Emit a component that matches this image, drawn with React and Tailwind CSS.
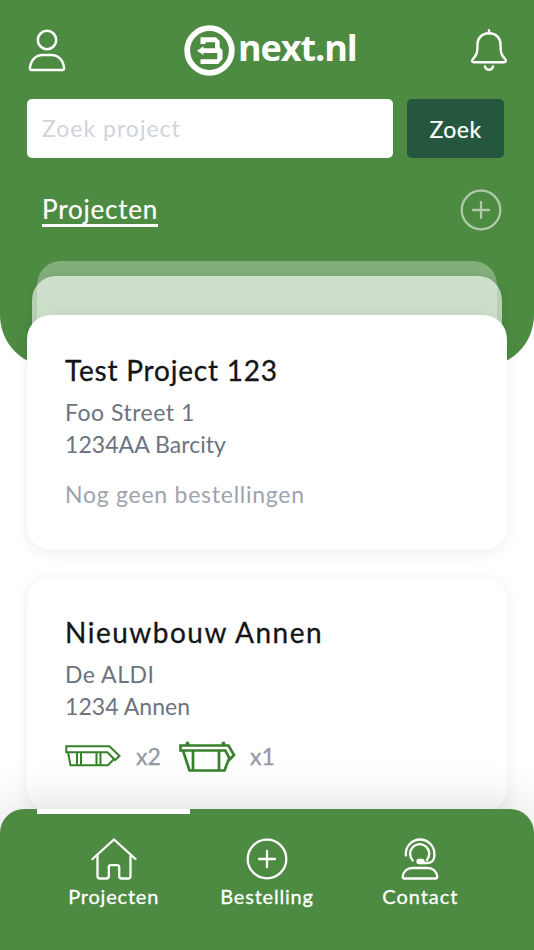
import React, { useState } from 'react';

function UserIcon() {
  return (
    <svg className="w-10 h-11" viewBox="0 0 40 44" fill="none" stroke="white" strokeWidth="2.500" strokeLinejoin="round">
      <circle cx="20" cy="11" r="9.200" />
      <path d="M4.500 41a1.600 1.600 0 0 1-1.600-1.800C3.500 31 9 26 15.500 26h9c6.500 0 12 5 12.600 13.200a1.600 1.600 0 0 1-1.600 1.800z" />
    </svg>
  );
}

function BellIcon() {
  return (
    <svg className="w-10 h-11" viewBox="0 0 40 44" fill="none" stroke="white" strokeWidth="2.400" strokeLinecap="round" strokeLinejoin="round">
      <path d="M20 1.300v3" />
      <path d="M20 4.300c-7.500 0-11.500 5-11.500 11.500 0 7.500-.7 10.300-4.200 13.700-2 2-1.300 3.800.9 3.800h29.600c2.200 0 2.900-1.800.9-3.800-3.500-3.400-4.200-6.200-4.200-13.700C31.500 9.300 27.500 4.300 20 4.300z" />
      <path d="M16 37.500c1 4.300 7 4.300 8 0" />
    </svg>
  );
}

function PlusIcon() {
  return (
    <svg className="w-[42px] h-[42px]" viewBox="0 0 42 42" fill="none" stroke="white" strokeWidth="2.300" strokeLinecap="round">
      <circle cx="21" cy="21" r="19.300" />
      <path d="M21 13v16M13 21h16" />
    </svg>
  );
}

function HomeIcon() {
  return (
    <svg className="w-[46px] h-[42px]" viewBox="0 0 46 42" fill="none" stroke="white" strokeWidth="2.300" strokeLinecap="round" strokeLinejoin="round">
      <path d="M1.500 21 23 1.500 44.500 21" />
      <path d="M6.500 18v20.200c0 1.500 1 2.300 2.300 2.300h6.700c1.500 0 2.300-.8 2.300-2.300V29.200c0-1.300.7-2 2-2h6.400c1.300 0 2 .7 2 2v9c0 1.500.8 2.300 2.300 2.300h6.700c1.300 0 2.300-.8 2.300-2.300V18" />
    </svg>
  );
}

function ContactIcon() {
  return (
    <svg className="w-[42px] h-[42px]" viewBox="0 0 42 42" fill="none" stroke="white" strokeWidth="2.300" strokeLinecap="round" strokeLinejoin="round">
      <path d="M6.800 17.500v-1.700a14.300 14.300 0 0 1 28.600 0v2c0 4.500-3 7.200-7.500 7.200H22" />
      <path d="M13.800 22.500a9.600 9.600 0 1 1 14.200-.5" />
      <rect x="18.500" y="22" width="6" height="3" rx="1.500" fill="white" />
      <path d="M5.200 40.500a1.500 1.500 0 0 1-1.500-1.700c.7-5.300 4.500-8.800 9.500-8.800h15.600c5 0 8.800 3.500 9.500 8.800a1.500 1.500 0 0 1-1.500 1.700z" />
    </svg>
  );
}

function LogoMark() {
  return (
    <svg className="w-[51px] h-[51px]" viewBox="0 0 51 51" fill="none">
      <circle cx="25.500" cy="25.500" r="22.300" stroke="white" strokeWidth="5.800" />
      <path d="M16.500 12.300H32l3.700 3.700v6.300l2.800 3V34l-4.300 4.900H16.500v-4.700h16.200l.6-.8v-5.300H19.500v1.900L13 25.700l6.500-4.500v2H31v-5.900H21.500v1.700H16.500z" fill="white" />
    </svg>
  );
}

function ClosedContainerIcon() {
  return (
    <svg className="w-[56px] h-8" viewBox="0 0 56 32" fill="none" stroke="#37812b" strokeWidth="2">
      <path d="M1.300 6.300h43.200L54.500 16l-4.500 4L42.500 12.300H1.300z" />
      <path d="M3 12.300 5.500 25.300h37.500L49 19M12 12.300v13M16 12.300v13M31.500 12.300v13M35.500 12.300v13" />
    </svg>
  );
}

function OpenContainerIcon() {
  return (
    <svg className="w-[57px] h-8" viewBox="0 0 57 32" fill="none" stroke="#37812b" strokeWidth="2.700">
      <path d="M1.500 5.500h48L55 15l-4 4.200-4.700-8.700H1.500z" />
      <path d="M4 10.500 10.500 30.500H45.500L50.500 17.500M14 10.500v20M40 10.500v20" />
      <path d="M8.500 4.500V3.300M44.500 4.500V3.300" strokeWidth="3.800" strokeLinecap="round" />
    </svg>
  );
}

const tabs = [
  { name: 'Projecten', icon: HomeIcon, tracking: 'tracking-[0.8px]' },
  { name: 'Bestelling', icon: PlusIcon, tracking: 'tracking-[0.8px]' },
  { name: 'Contact', icon: ContactIcon, tracking: 'tracking-[0.95px]' },
];

function ProjectCard({ title, titleClass, street, city, children }) {
  return (
    <div className="relative h-[235px] rounded-3xl bg-white pl-[38px] pt-[36px] shadow-[0_3px_16px_rgba(0,0,0,0.07)]">
      <h2 className={`text-[28px] leading-[38px] text-[#151515] [-webkit-text-stroke:0.3px_#151515] ${titleClass}`}>{title}</h2>
      <p className="mt-[7px] text-[23px] leading-8 tracking-[0.5px] text-[#6c7381]">{street}</p>
      <p className="text-[23px] leading-8 tracking-[0.05px] text-[#6c7381]">{city}</p>
      {children}
    </div>
  );
}

function App() {
  const [query, setQuery] = useState('');
  const [active, setActive] = useState('Projecten');

  return (
    <div className="relative flex h-[950px] w-[534px] flex-col overflow-hidden bg-white font-['Lato',sans-serif]">
      <header className="h-[367px] shrink-0 rounded-b-[52px] bg-[#4c8b41] px-[27px] pt-[25px]">
        <div className="flex h-[51px] items-center justify-between">
          <button aria-label="Account"><UserIcon /></button>
          <div className="flex items-center gap-[3px] pl-[5px]">
            <LogoMark />
            <span className="-mt-1.5 w-[119px] whitespace-nowrap font-['Open_Sans',sans-serif] text-[36px] font-bold leading-none tracking-[-1.1px] text-white">next.nl</span>
          </div>
          <button aria-label="Meldingen" className="-mr-[2px]"><BellIcon /></button>
        </div>

        <div className="mt-[23px] flex h-[59px] gap-[14px]">
          <input
            type="text"
            value={query}
            onChange={(e) => setQuery(e.target.value)}
            placeholder="Zoek project"
            className="w-[366px] rounded-[5px] bg-white px-[15px] text-[23px] tracking-[1px] text-gray-700 placeholder:text-[#d1d4da]"
          />
          <button className="w-[97px] rounded-[5px] bg-[#24573d] pt-0.5 text-[23px] tracking-[0.5px] text-white [-webkit-text-stroke:0.2px_white]">Zoek</button>
        </div>

        <div className="mt-[31px] flex h-[42px] items-center justify-between pl-[15px] pr-[5px]">
          <span className="h-[34px] border-b-3 border-white pt-[3px] text-[26px] leading-[27px] tracking-[0.8px] text-white [-webkit-text-stroke:0.2px_white]">Projecten</span>
          <button aria-label="Nieuw project" className="opacity-55"><PlusIcon /></button>
        </div>
      </header>

      <main className="-mt-[52px] flex shrink-0 flex-col gap-[27px] px-[27px]">
        <div className="relative">
          <div className="absolute inset-x-[10px] -top-[54px] h-20 rounded-t-3xl bg-white/30" />
          <div className="absolute inset-x-[5px] -top-[39px] h-20 rounded-t-3xl bg-white/60 shadow-[0_0_10px_rgba(0,0,0,0.06)]" />
          <ProjectCard title="Test Project 123" titleClass="tracking-[0.8px]" street="Foo Street 1" city="1234AA Barcity">
            <p className="mt-[18px] text-[23px] leading-8 tracking-[0.75px] text-[#9ea3ad]">Nog geen bestellingen</p>
          </ProjectCard>
        </div>
        <ProjectCard title="Nieuwbouw Annen" titleClass="tracking-[1.5px]" street="De ALDI" city="1234 Annen">
          <div className="mt-[18px] flex items-center text-[23px] leading-8 text-[#9298a5] [-webkit-text-stroke:0.3px_#9298a5]">
            <ClosedContainerIcon />
            <span className="ml-[15px] w-[43px]">x2</span>
            <OpenContainerIcon />
            <span className="ml-[14px]">x1</span>
          </div>
        </ProjectCard>
      </main>

      <nav className="absolute inset-x-0 bottom-0 flex h-[141px] rounded-t-3xl bg-[#4c8b41] px-[37px] shadow-[0_0_50px_rgba(0,0,0,0.16)]">
        {tabs.map(({ name, icon: Icon, tracking }) => (
          <button
            key={name}
            onClick={() => setActive(name)}
            className={`flex flex-1 flex-col items-center border-t-[5px] pt-6 text-white ${active === name ? 'border-white' : 'border-transparent'}`}
          >
            <Icon />
            <span className={`mt-1 text-xl leading-6 [-webkit-text-stroke:0.3px_white] ${tracking}`}>{name}</span>
          </button>
        ))}
      </nav>
    </div>
  );
}

export default App;
